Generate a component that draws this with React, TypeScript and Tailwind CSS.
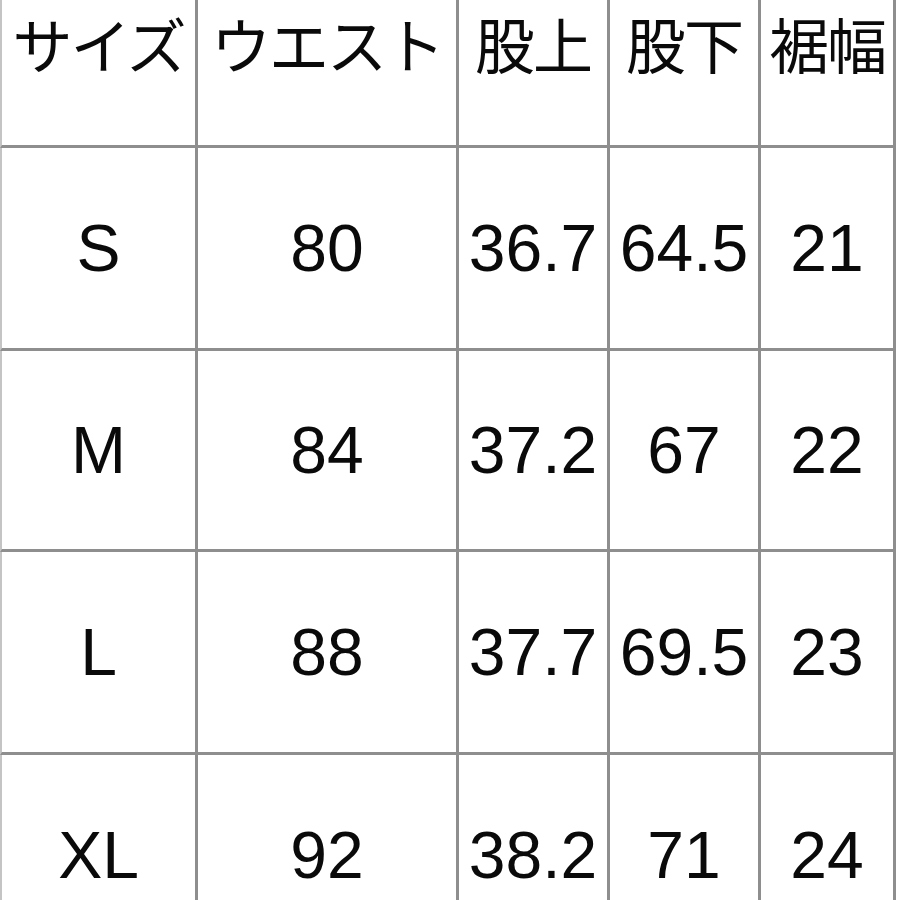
import React from "react";

const headers = ["サイズ", "ウエスト", "股上", "股下", "裾幅"];
const rows = [
  ["S", "80", "36.7", "64.5", "21"],
  ["M", "84", "37.2", "67", "22"],
  ["L", "88", "37.7", "69.5", "23"],
  ["XL", "92", "38.2", "71", "24"],
];

function Cell({ children, first, jp }: { children: React.ReactNode; first: boolean; jp?: boolean }) {
  return (
    <div
      className={
        "flex justify-center border-r-[3px] border-b-[3px] border-[#8e8e8e] text-[#0a0a0a] leading-none whitespace-nowrap " +
        (first ? "border-l-[2px] border-l-[#c4c4c4] " : "") +
        (jp
          ? "items-start pt-[13px] text-[60px] tracking-[-2px] [font-family:'Noto_Sans_CJK_JP','Noto_Sans',sans-serif]"
          : "items-center text-[66px] [font-family:'Liberation_Sans',Arial,sans-serif]")
      }
    >
      {children}
    </div>
  );
}

export default function App() {
  return (
    <div className="w-[900px] h-[900px] overflow-hidden bg-white">
      <div className="grid w-[896px] grid-cols-[198px_261px_151px_151px_135px] grid-rows-[148px_203px_201px_203px_203px]">
        {headers.map((h, i) => (
          <Cell key={h} first={i === 0} jp>
            {h}
          </Cell>
        ))}
        {rows.map((r) =>
          r.map((v, i) => (
            <Cell key={r[0] + i} first={i === 0}>
              {v}
            </Cell>
          ))
        )}
      </div>
    </div>
  );
}
